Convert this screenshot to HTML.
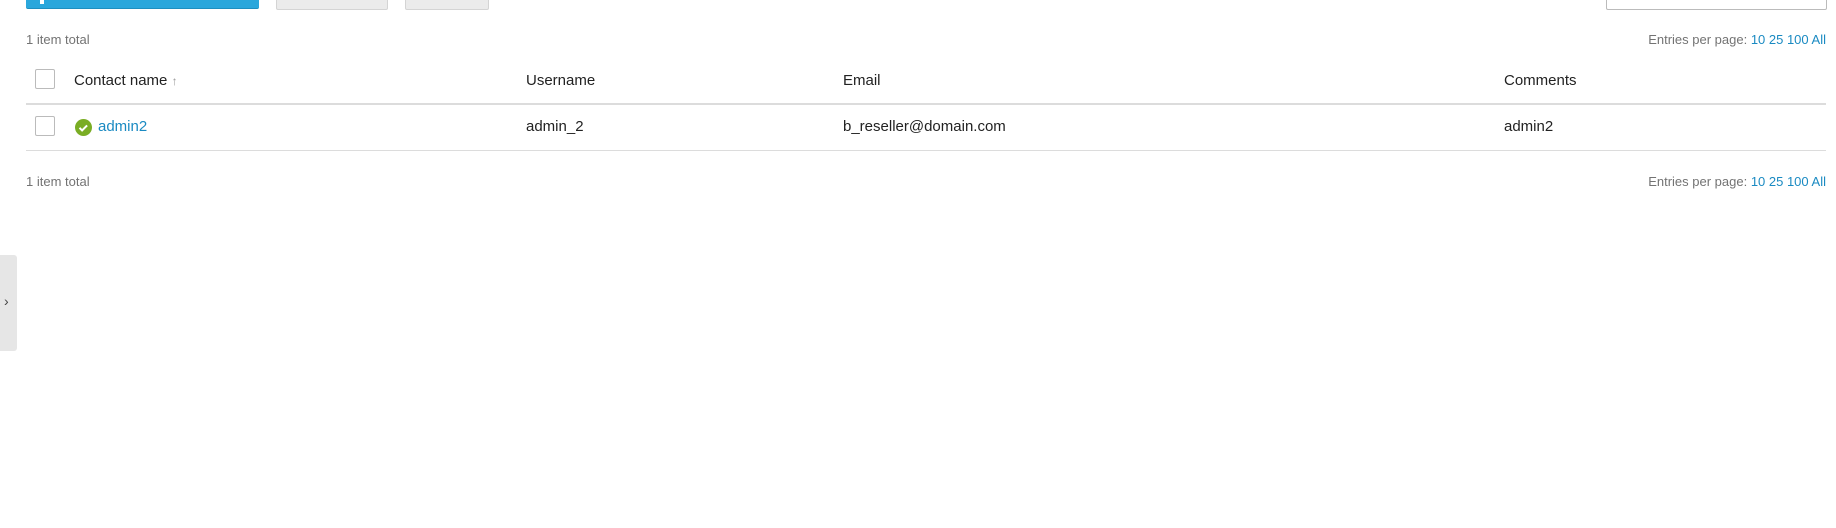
<!DOCTYPE html>
<html><head><style>
body{margin:0;width:1836px;height:528px;background:#fff;font-family:"Liberation Sans",sans-serif;position:relative;overflow:hidden;color:#222}
.a{position:absolute}
.small{font-size:13px;color:#737373}
.hd{font-size:15px;color:#222}
.lnk{color:#1a8ac2}
.cb{width:20px;height:20px;border:1px solid #bbb;border-radius:2px;background:#fff;box-sizing:border-box}
</style></head><body>
<div class="a" style="left:26px;top:-4px;width:233px;height:12px;background:#2aa7dc;border-radius:0 0 2px 2px;border-bottom:1px solid #1e8fc0"></div>
<div class="a" style="left:40px;top:0;width:4px;height:4px;background:#fff"></div>
<div class="a" style="left:276px;top:-4px;width:110px;height:12px;background:#ebebeb;border:1px solid #d4d4d4;border-radius:0 0 2px 2px"></div>
<div class="a" style="left:405px;top:-4px;width:82px;height:12px;background:#ebebeb;border:1px solid #d4d4d4;border-radius:0 0 2px 2px"></div>
<div class="a" style="left:1606px;top:-4px;width:219px;height:12px;border:1px solid #bbb;border-radius:0 0 2px 2px"></div>

<div class="a small" style="left:26px;top:32px">1 item total</div>
<div class="a small" style="right:10px;top:32px">Entries per page: <span class="lnk">10 25 100 All</span></div>

<div class="a cb" style="left:35px;top:69px"></div>
<div class="a hd" style="left:74px;top:72px">Contact name <span style="color:#999;font-size:12px">↑</span></div>
<div class="a hd" style="left:526px;top:72px">Username</div>
<div class="a hd" style="left:843px;top:72px">Email</div>
<div class="a hd" style="left:1504px;top:72px">Comments</div>
<div class="a" style="left:26px;top:103px;width:1800px;height:2px;background:#dcdcdc"></div>

<div class="a cb" style="left:35px;top:116px"></div>
<svg class="a" style="left:75px;top:119px" width="17" height="17" viewBox="0 0 17 17"><circle cx="8.5" cy="8.5" r="8.5" fill="#7aad24"/><path d="M4.5 8.8l2.6 2.6 5-5" stroke="#fff" stroke-width="2" fill="none"/></svg>
<div class="a hd lnk" style="left:98px;top:118px">admin2</div>
<div class="a hd" style="left:526px;top:118px">admin_2</div>
<div class="a hd" style="left:843px;top:118px">b_reseller@domain.com</div>
<div class="a hd" style="left:1504px;top:118px">admin2</div>
<div class="a" style="left:26px;top:150px;width:1800px;height:1px;background:#dcdcdc"></div>

<div class="a small" style="left:26px;top:174px">1 item total</div>
<div class="a small" style="right:10px;top:174px">Entries per page: <span class="lnk">10 25 100 All</span></div>

<div class="a" style="left:0;top:255px;width:17px;height:96px;background:#e6e6e6;border-radius:0 3px 3px 0"></div>
<div class="a" style="left:4px;top:293px;font-size:14px;color:#444">›</div>
</body></html>
